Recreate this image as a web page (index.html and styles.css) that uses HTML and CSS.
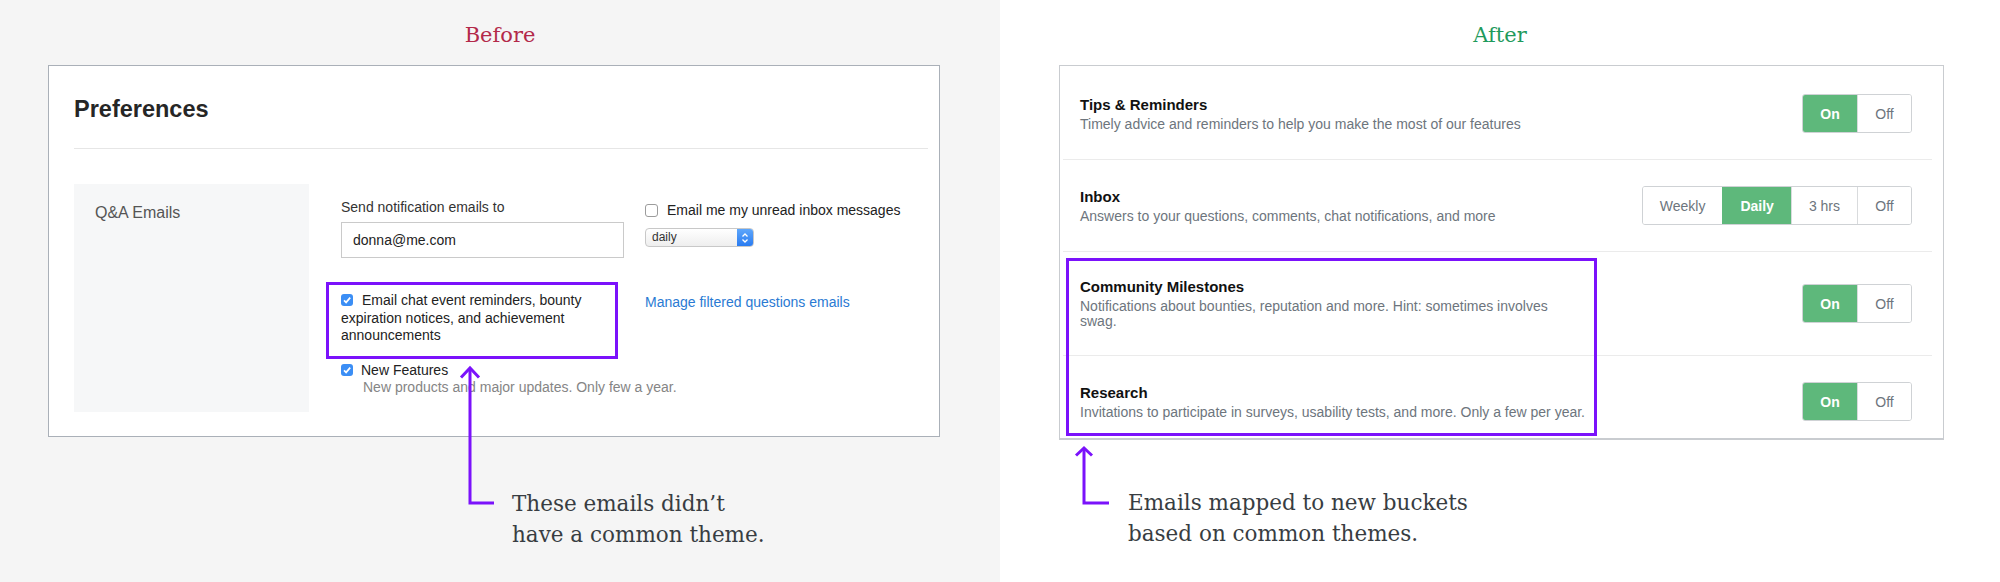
FILE: index.html
```html
<!DOCTYPE html>
<html lang="en">
<head>
  <meta charset="UTF-8" />
  <meta name="viewport" content="width=device-width, initial-scale=1" />
  <title>Email preferences: before and after</title>
  <link rel="stylesheet" href="styles.css">
</head>
<body>
  <div class="compare">

    <!-- old preferences screen -->
    <section class="panel panel-before">
      <h2 class="panel-title">Before</h2>
      <div class="prefs">
        <div class="prefs-head">
          <h1>Preferences</h1>
        </div>
        <div class="prefs-body">
          <div class="prefs-side">Q&amp;A Emails</div>
          <div class="prefs-form">
            <div class="form-row">
              <div class="col-a">
                <div class="field-label">Send notification emails to</div>
                <input class="text-input" type="text" value="donna@me.com" />
              </div>
              <div class="col-b col-b-top">
                <div class="check-line"><span class="cb"></span>Email me my unread inbox messages</div>
                <div class="select">
                  <span class="select-value">daily</span>
                  <span class="select-stepper">
                    <svg width="8" height="12" viewBox="0 0 8 12"><path d="M1.5 4.5 L4 2 L6.5 4.5 M1.5 7.5 L4 10 L6.5 7.5" fill="none" stroke="#fff" stroke-width="1.3"/></svg>
                  </span>
                </div>
              </div>
            </div>
            <div class="form-row form-row-2">
              <div class="col-a">
                <div class="highlight">
                  <span class="cb cb-on"><svg width="12" height="12" viewBox="0 0 12 12"><path d="M3 6.3 L5.1 8.4 L9.2 3.6" fill="none" stroke="#fff" stroke-width="1.7"/></svg></span>Email chat event reminders, bounty expiration notices, and achievement announcements
                </div>
              </div>
              <div class="col-b col-b-link">
                <a class="link" href="#">Manage filtered questions emails</a>
              </div>
            </div>
            <div class="new-features">
              <div class="check-line"><span class="cb cb-on"><svg width="12" height="12" viewBox="0 0 12 12"><path d="M3 6.3 L5.1 8.4 L9.2 3.6" fill="none" stroke="#fff" stroke-width="1.7"/></svg></span>New Features</div>
              <div class="hint">New products and major updates. Only few a year.</div>
            </div>
          </div>
        </div>
      </div>
      <p class="note">These emails didn’t<br>have a common theme.</p>
      <svg class="arrow arrow-before" width="50" height="150" viewBox="0 0 50 150">
        <path d="M15 9 L15 144 L39 144" fill="none" stroke="#7b12fb" stroke-width="3"/>
        <path d="M6 18.5 L15 9 L24 18.5" fill="none" stroke="#7b12fb" stroke-width="3"/>
      </svg>
    </section>

    <!-- new settings screen -->
    <section class="panel panel-after">
      <h2 class="panel-title">After</h2>
      <div class="settings">
        <div class="callout"></div>
        <div class="setting">
          <div class="setting-text">
            <div class="setting-name">Tips &amp; Reminders</div>
            <div class="setting-desc">Timely advice and reminders to help you make the most of our features</div>
          </div>
          <div class="seg"><span class="seg-opt is-on">On</span><span class="seg-opt">Off</span></div>
        </div>
        <div class="setting">
          <div class="setting-text">
            <div class="setting-name">Inbox</div>
            <div class="setting-desc">Answers to your questions, comments, chat notifications, and more</div>
          </div>
          <div class="seg"><span class="seg-opt">Weekly</span><span class="seg-opt is-on">Daily</span><span class="seg-opt">3 hrs</span><span class="seg-opt">Off</span></div>
        </div>
        <div class="setting">
          <div class="setting-text">
            <div class="setting-name">Community Milestones</div>
            <div class="setting-desc">Notifications about bounties, reputation and more. Hint: sometimes involves swag.</div>
          </div>
          <div class="seg"><span class="seg-opt is-on">On</span><span class="seg-opt">Off</span></div>
        </div>
        <div class="setting">
          <div class="setting-text">
            <div class="setting-name">Research</div>
            <div class="setting-desc">Invitations to participate in surveys, usability tests, and more. Only a few per year.</div>
          </div>
          <div class="seg"><span class="seg-opt is-on">On</span><span class="seg-opt">Off</span></div>
        </div>
      </div>
      <p class="note">Emails mapped to new buckets<br>based on common themes.</p>
      <svg class="arrow arrow-after" width="50" height="70" viewBox="0 0 50 70">
        <path d="M15 9 L15 64 L40 64" fill="none" stroke="#7b12fb" stroke-width="3"/>
        <path d="M7 16.5 L15 9 L23 16.5" fill="none" stroke="#7b12fb" stroke-width="3"/>
      </svg>
    </section>

  </div>
</body>
</html>
```

FILE: styles.css
```css
body {
  margin: 0;
  font-family: "Liberation Sans", Arial, Helvetica, sans-serif;
  color: #222;
}

.compare {
  display: flex;
  width: 2000px;
  height: 582px;
  overflow: hidden;
}

.panel {
  position: relative;
  width: 1000px;
  height: 582px;
  box-sizing: border-box;
  padding-top: 23px;
}

.panel-before {
  background: #f5f5f5;
}

.panel-after {
  background: #fff;
}

.panel-title {
  margin: 0 0 18px;
  font-family: "DejaVu Serif", serif;
  font-weight: normal;
  font-size: 21px;
  line-height: 24px;
  text-align: center;
}

.panel-before .panel-title { color: #b3294a; }
.panel-after .panel-title { color: #1f9a5c; }

/* annotation captions + arrows */
.note {
  margin: 0;
  font-family: "DejaVu Serif", serif;
  font-size: 21.5px;
  line-height: 31px;
  color: #383d42;
}

.panel-before .note {
  margin: 51px 0 0 512px;
}

.panel-after .note {
  margin: 47px 0 0 128px;
}

.arrow {
  position: absolute;
}

.arrow-before {
  left: 455px;
  top: 359px;
}

.arrow-after {
  left: 69px;
  top: 439px;
}

/* ---------- Before: preferences card ---------- */
.prefs {
  margin-left: 48px;
  width: 892px;
  box-sizing: border-box;
  background: #fff;
  border: 1px solid #aab0b8;
  padding: 29px 11px 24px 25px;
}

.prefs-head {
  padding-bottom: 25px;
  border-bottom: 1px solid #e6e6e6;
}

.prefs-head h1 {
  margin: 0;
  font-size: 23.5px;
  line-height: 28px;
  font-weight: bold;
  color: #262626;
}

.prefs-body {
  display: flex;
  margin-top: 35px;
}

.prefs-side {
  width: 235px;
  box-sizing: border-box;
  background: #f6f7f8;
  padding: 18.5px 21px;
  font-size: 16px;
  line-height: 20px;
  color: #555;
}

.prefs-form {
  margin-left: 32px;
  padding: 15px 0 16px;
  font-size: 14px;
  line-height: 17px;
  color: #222;
}

.form-row {
  display: flex;
  gap: 21px;
}

.form-row-2 {
  margin-top: 24px;
}

.col-a {
  width: 283px;
  flex-shrink: 0;
}

.col-b-top {
  padding-top: 3px;
}

.col-b-link {
  padding-top: 12px;
}

.field-label {
  color: #333;
}

.text-input {
  display: block;
  margin: 6px 0 0;
  width: 283px;
  height: 36px;
  box-sizing: border-box;
  border: 1px solid #cacaca;
  padding: 0 11px;
  font-family: inherit;
  font-size: 14px;
  color: #222;
  background: #fff;
  outline: none;
}

.cb {
  display: inline-block;
  width: 12px;
  height: 12px;
  box-sizing: border-box;
  border-radius: 3px;
  margin-right: 9px;
  vertical-align: -1px;
}

.cb svg {
  display: block;
}

.cb-on {
  background: #3b8ef5;
}

.col-b .cb {
  width: 13px;
  height: 13px;
  border: 1px solid #9c9c9c;
  background: #fff;
  vertical-align: -2px;
}

.select {
  display: flex;
  margin-top: 9px;
  width: 109px;
  height: 19px;
  box-sizing: border-box;
  border: 1px solid #c8c8c8;
  border-radius: 4px;
  background: linear-gradient(#fff, #eeeeee);
  overflow: hidden;
}

.select-value {
  flex: 1;
  padding-left: 6px;
  font-size: 12px;
  line-height: 17px;
  color: #333;
}

.select-stepper {
  width: 16px;
  display: flex;
  align-items: center;
  justify-content: center;
  background: linear-gradient(#5ea6fb, #2a7cf1);
}

.select-stepper svg {
  display: block;
}

.highlight {
  margin-left: -15px;
  width: 292px;
  box-sizing: border-box;
  border: 3px solid #7b12fb;
  padding: 7px 12px 11px;
  line-height: 17.5px;
  color: #222;
}

.link {
  color: #2a7ad3;
  text-decoration: none;
}

.new-features {
  margin-top: 3px;
}

.new-features .cb {
  margin-right: 8px;
}

.hint {
  padding-left: 22px;
  color: #858585;
}

/* ---------- After: settings list ---------- */
.settings {
  position: relative;
  margin-left: 59px;
  width: 885px;
  box-sizing: border-box;
  background: #fff;
  border: 1px solid #c9ccd0;
  border-bottom-width: 2px;
  padding-top: 2px;
}

.setting {
  display: flex;
  align-items: center;
  justify-content: space-between;
  margin: 0 11px 0 3px;
  padding: 26px 20px 26px 17px;
  border-bottom: 1px solid #ebebeb;
}

.setting:last-child {
  border-bottom: none;
  padding-bottom: 17px;
}

.setting-text {
  max-width: 507px;
}

.setting-name {
  font-size: 15px;
  line-height: 18px;
  font-weight: bold;
  color: #111;
}

.setting-desc {
  margin-top: 3px;
  font-size: 14px;
  line-height: 15px;
  color: #6d757d;
}

.seg {
  display: flex;
  height: 39px;
  box-sizing: border-box;
  border: 1px solid #cfd2d5;
  border-radius: 3px;
  overflow: hidden;
}

.seg-opt {
  display: flex;
  align-items: center;
  justify-content: center;
  min-width: 54px;
  box-sizing: border-box;
  padding: 0 17px;
  border-left: 1px solid #d9dbdd;
  font-size: 14px;
  color: #6d757d;
  background: #fff;
}

.seg-opt:first-child {
  border-left: none;
}

.seg-opt.is-on {
  background: #5eb87b;
  border-left-color: #5eb87b;
  color: #fff;
  font-weight: bold;
}

.callout {
  position: absolute;
  left: 6px;
  top: 192px;
  width: 531px;
  height: 178px;
  box-sizing: border-box;
  border: 3px solid #7b12fb;
  pointer-events: none;
  z-index: 1;
}
```
